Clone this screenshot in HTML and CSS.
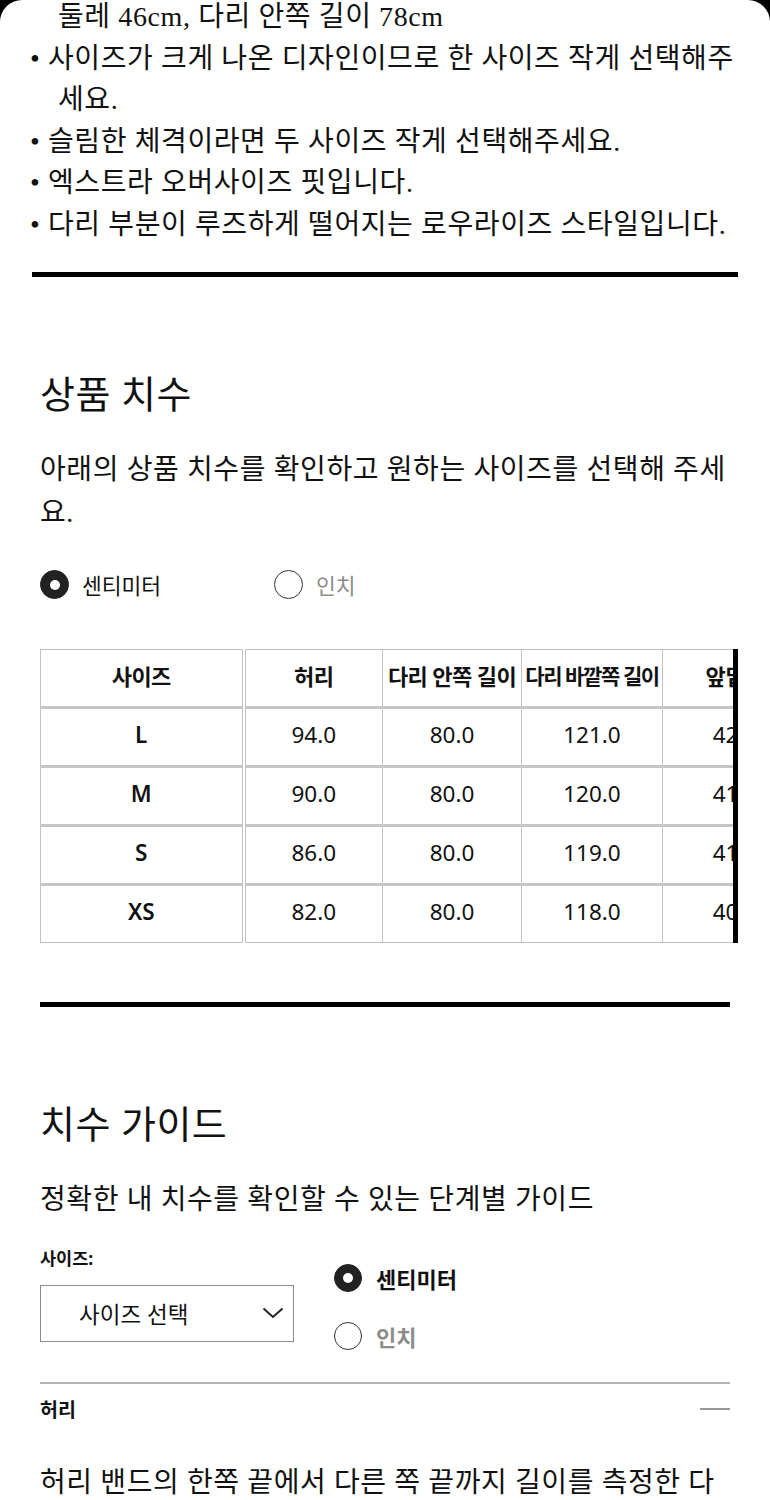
FILE: index.html
```html
<!DOCTYPE html>
<html lang="ko">
<head>
<meta charset="utf-8">
<title>상품 치수</title>
<link rel="stylesheet" href="styles.css">
</head>
<body>
<div class="sheet">
  <div class="notes">
    <p class="cont">둘레 46cm, 다리 안쪽 길이 78cm</p>
    <p class="item">• 사이즈가 크게 나온 디자인이므로 한 사이즈 작게 선택해주세요.</p>
    <p class="item">• 슬림한 체격이라면 두 사이즈 작게 선택해주세요.</p>
    <p class="item">• 엑스트라 오버사이즈 핏입니다.</p>
    <p class="item">• 다리 부분이 루즈하게 떨어지는 로우라이즈 스타일입니다.</p>
  </div>
  <div class="rule-top"></div>

  <section class="section">
    <h2 class="title">상품 치수</h2>
    <p class="desc">아래의 상품 치수를 확인하고 원하는 사이즈를 선택해 주세요.</p>
    <div class="unit-row">
      <label class="unit unit-first"><span class="radio on"></span><span class="unit-label">센티미터</span></label>
      <label class="unit"><span class="radio"></span><span class="unit-label muted">인치</span></label>
    </div>
    <div class="table-wrap">
      <table class="sizes">
        <colgroup>
          <col class="c1"><col class="c2"><col class="c3"><col class="c4"><col class="c5">
        </colgroup>
        <thead>
          <tr><th>사이즈</th><th>허리</th><th>다리 안쪽 길이</th><th class="tight">다리 바깥쪽 길이</th><th>앞밑위</th></tr>
        </thead>
        <tbody>
          <tr><td class="sz">L</td><td>94.0</td><td>80.0</td><td>121.0</td><td>42.0</td></tr>
          <tr><td class="sz">M</td><td>90.0</td><td>80.0</td><td>120.0</td><td>41.0</td></tr>
          <tr><td class="sz">S</td><td>86.0</td><td>80.0</td><td>119.0</td><td>41.0</td></tr>
          <tr><td class="sz">XS</td><td>82.0</td><td>80.0</td><td>118.0</td><td>40.0</td></tr>
        </tbody>
      </table>
    </div>
    <div class="rule-mid"></div>

    <h2 class="title title-2">치수 가이드</h2>
    <p class="desc">정확한 내 치수를 확인할 수 있는 단계별 가이드</p>

    <div class="guide">
      <div class="guide-left">
        <div class="field-label">사이즈:</div>
        <div class="select">
          <span>사이즈 선택</span>
          <svg class="chev" width="22" height="12" viewBox="0 0 22 12"><polyline points="1.5,1.5 11,10 20.5,1.5" fill="none" stroke="#222" stroke-width="2"/></svg>
        </div>
      </div>
      <div class="guide-right">
        <label class="gunit"><span class="radio on"></span><span class="gunit-label">센티미터</span></label>
        <label class="gunit"><span class="radio"></span><span class="gunit-label muted">인치</span></label>
      </div>
    </div>

    <div class="rule-thin"></div>
    <div class="acc-head">
      <span>허리</span>
      <span class="minus"></span>
    </div>
    <p class="desc desc-last">허리 밴드의 한쪽 끝에서 다른 쪽 끝까지 길이를 측정한 다음 그 값을 두 배로 곱합니다.</p>
  </section>
</div>
</body>
</html>
```
FILE: styles.css
```css
html {
  background: #000;
}
body {
  margin: 0;
  font-family: "Liberation Serif", "Noto Sans CJK KR", serif;
  color: #111;
}
.sheet {
  background: #fff;
  border-radius: 22px 22px 0 0;
  min-height: 1500px;
  overflow: hidden;
}
.notes {
  padding: 0 30px;
  margin-top: -4px;
  font-size: 28px;
  letter-spacing: 0.6px;
  line-height: 41.6px;
}
.notes p {
  margin: 0;
}
.cont {
  padding-left: 28px;
}
.item {
  padding-left: 28px;
  text-indent: -28px;
}
.rule-top {
  height: 5px;
  background: #000;
  margin: 26px 32px 0 32px;
}
.section {
  padding: 0 40px;
}
.title {
  font-size: 38px;
  letter-spacing: 0.5px;
  line-height: 50px;
  font-weight: normal;
  margin: 93px 0 0;
}
.title-2 {
  margin-top: 93px;
}
.desc {
  font-size: 28px;
  letter-spacing: 0.6px;
  line-height: 43px;
  margin: 28px 0 0;
}
.unit-row {
  display: flex;
  align-items: center;
  margin-top: 36px;
  height: 30px;
  font-family: "Noto Sans", "Noto Sans CJK KR", sans-serif;
}
.unit {
  display: flex;
  align-items: center;
  gap: 13px;
}
.unit-first {
  width: 234px;
}
.unit-label {
  font-size: 21.5px;
  color: #111;
}
.muted {
  color: #8c8c8c;
}
.radio {
  box-sizing: border-box;
  width: 29px;
  height: 29px;
  border-radius: 50%;
  border: 1.5px solid #333;
  background: #fff;
  display: flex;
  align-items: center;
  justify-content: center;
  flex: none;
}
.radio.on {
  background: #222;
  border-color: #222;
}
.radio.on::after {
  content: "";
  width: 10px;
  height: 10px;
  border-radius: 50%;
  background: #fff;
}
.table-wrap {
  margin-top: 49px;
  margin-right: -8px;
  border-right: 5px solid #000;
  overflow: hidden;
}
.sizes {
  table-layout: fixed;
  width: 767px;
  border-collapse: collapse;
  font-family: "Noto Sans", "Noto Sans CJK KR", sans-serif;
  font-size: 22.5px;
  color: #111;
}
.c1 { width: 203px; }
.c2 { width: 139px; }
.c3 { width: 139px; }
.c4 { width: 141px; }
.c5 { width: 145px; }
.sizes th,
.sizes td {
  border: 1px solid #c2c2c2;
  text-align: center;
  padding: 0 0 5px;
  height: 51px;
  white-space: nowrap;
  overflow: hidden;
}
.sizes th {
  font-size: 22px;
  font-weight: bold;
  letter-spacing: -0.6px;
}
.sizes th.tight {
  font-size: 21px;
  letter-spacing: -1.4px;
}
.sizes tbody td {
  border-top: 3px solid #c6c6c6;
}
.sizes th:first-child,
.sizes td:first-child {
  border-right: 4px double #c2c2c2;
}
.sizes td.sz {
  font-weight: 600;
  font-size: 22.5px;
}
.rule-mid {
  height: 5px;
  background: #000;
  margin-top: 59px;
}
.guide {
  display: flex;
  align-items: flex-start;
  gap: 40px;
  margin-top: 27px;
  font-family: "Noto Sans", "Noto Sans CJK KR", sans-serif;
}
.guide-left {
  width: 254px;
}
.field-label {
  font-size: 17.5px;
  font-weight: bold;
  line-height: 20px;
}
.select {
  box-sizing: border-box;
  margin-top: 17px;
  height: 57px;
  border: 1px solid #8a8a8a;
  display: flex;
  align-items: center;
  justify-content: space-between;
  padding: 0 9px 0 38px;
  font-size: 22.5px;
}
.chev {
  display: block;
}
.guide-right {
  display: flex;
  flex-direction: column;
  gap: 29px;
  padding-top: 16px;
}
.gunit {
  display: flex;
  align-items: center;
  gap: 14px;
  height: 29px;
}
.gunit .radio {
  width: 28px;
  height: 28px;
}
.gunit-label {
  font-size: 22px;
  font-weight: bold;
}
.rule-thin {
  height: 2px;
  background: #b4b4b4;
  margin-top: 31px;
}
.acc-head {
  display: flex;
  justify-content: space-between;
  align-items: center;
  margin-top: 13px;
  height: 24px;
  font-family: "Noto Sans", "Noto Sans CJK KR", sans-serif;
  font-size: 19.5px;
  font-weight: bold;
}
.minus {
  width: 30px;
  height: 2px;
  background: #999;
}
.desc-last {
  margin-top: 40px;
}
```
